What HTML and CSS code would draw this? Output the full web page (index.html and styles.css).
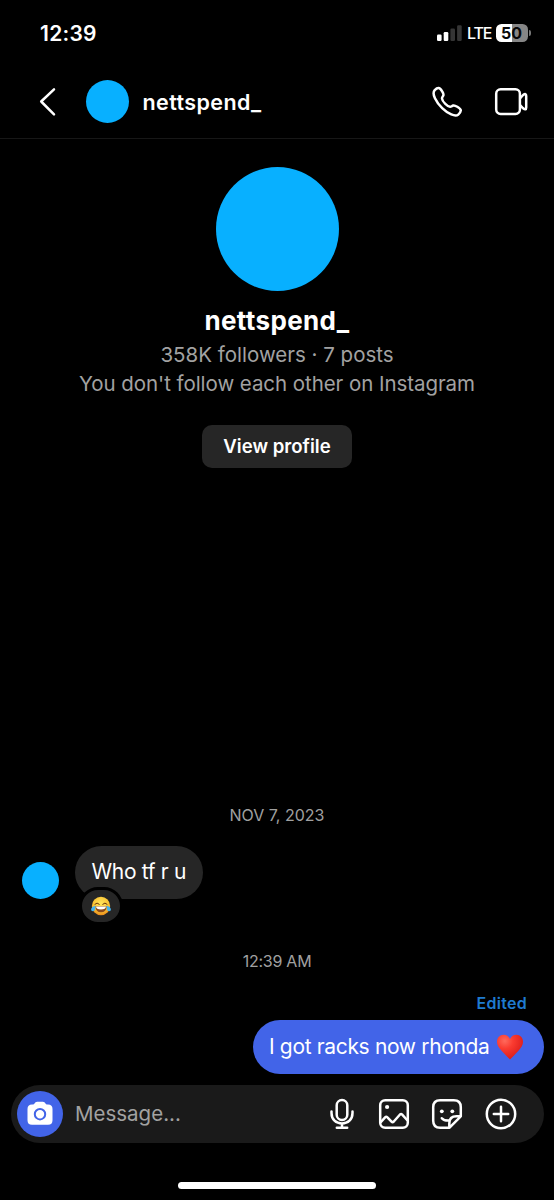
FILE: index.html
```
<!DOCTYPE html>
<html lang="en">
<head>
<meta charset="utf-8">
<title>nettspend_</title>
<link rel="stylesheet" href="styles.css">
</head>
<body>
<main class="screen">
  <div class="status">
    <span class="clock">12:39</span>
    <div class="indicators">
      <svg class="signal" width="25" height="16" viewBox="0 0 25 16">
        <rect x="0" y="9.5" width="4.6" height="6.5" rx="1.2" fill="#fff"/>
        <rect x="6.7" y="7" width="4.6" height="9" rx="1.2" fill="#fff"/>
        <rect x="13.4" y="3.6" width="4.6" height="12.4" rx="1.2" fill="#353535"/>
        <rect x="20.1" y="0.3" width="4.6" height="15.7" rx="1.2" fill="#353535"/>
      </svg>
      <span class="network">LTE</span>
      <div class="battery"><span class="level">50</span></div>
      <span class="nub"></span>
    </div>
  </div>

  <header class="topbar">
    <svg class="back" width="18" height="30" viewBox="0 0 18 30" fill="none" stroke="#fff" stroke-width="2.5" stroke-linecap="round" stroke-linejoin="round"><path d="M15 2.3 2.2 14.5 15 27.3"/></svg>
    <span class="avatar avatar-top"></span>
    <h1 class="name">nettspend_</h1>
    <svg class="phone" width="32" height="32" viewBox="0 0 32 32" fill="none" stroke="#fff" stroke-width="2.5" stroke-linejoin="round"><path d="M3.7 4.1C5 2.8 6.3 2 7.6 2.1C9 2.2 10.1 3.7 11.3 5.6C12.3 7.2 12.9 8.1 12.3 9.5C11.8 10.7 10.9 11.3 11 12.5C11.1 14.2 12.7 16.3 14.3 17.8C16 19.4 17.4 20.7 19 20.8C20.3 20.9 20.8 19.9 22.2 19.5C23.6 19.1 24.7 19.8 26.3 20.8C28.3 22 29.9 23 29.8 24.5C29.7 26.1 28.7 27.4 27.3 28.6C24.2 31.2 17.1 27.8 11.2 22.1C5.2 16.3 .4 7.7 3.7 4.1Z"/></svg>
    <svg class="video" width="34" height="30" viewBox="0 0 34 30" fill="none" stroke="#fff" stroke-width="2.5" stroke-linejoin="round"><rect x="2.2" y="2.3" width="23.7" height="24.6" rx="4.4"/><path d="M26 11.3 29.1 8Q32.2 5.8 32.2 8.9V20.4Q32.2 23.6 29.1 21.3L26 18"/></svg>
  </header>

  <section class="profile">
    <span class="avatar avatar-large"></span>
    <h2 class="title">nettspend_</h2>
    <p class="stats">358K followers · 7 posts</p>
    <p class="relation">You don't follow each other on Instagram</p>
    <button class="view">View profile</button>
  </section>

  <section class="thread">
    <p class="stamp date">NOV 7, 2023</p>
    <div class="incoming">
      <span class="avatar avatar-small"></span>
      <div class="bubble bubble-in">Who tf r u
        <span class="reaction">
          <svg width="20" height="20" viewBox="0 0 20 20">
            <defs><radialGradient id="face" cx=".5" cy=".35" r=".65"><stop offset="0" stop-color="#ffe65c"/><stop offset=".65" stop-color="#fcc433"/><stop offset="1" stop-color="#e98b1c"/></radialGradient></defs>
            <circle cx="10" cy="10" r="9.2" fill="url(#face)"/>
            <path d="M3.9 8.2Q6 5.7 8.3 8.2M11.7 8.2Q14 5.7 16.1 8.2" fill="none" stroke="#653410" stroke-width="1" stroke-linecap="round"/>
            <path d="M4.3 10.2H15.7Q15.3 16.2 10 16.2T4.3 10.2Z" fill="#8a4a1c"/>
            <path d="M5 10.5H15Q14.9 13.4 10 13.4T5 10.5Z" fill="#fff"/>
            <path d="M4.5 9.7C2 10 .1 11.6.1 13.5C.1 15.8 3.5 15.8 4.1 13.2ZM15.5 9.7C18 10 19.9 11.6 19.9 13.5C19.9 15.8 16.5 15.8 15.9 13.2Z" fill="#45b4ef"/>
          </svg>
        </span>
      </div>
    </div>
    <p class="stamp time">12:39 AM</p>
    <p class="edited">Edited</p>
    <div class="bubble bubble-out">
      <span>I got racks now rhonda</span>
      <svg class="heart" width="28" height="28" viewBox="0 0 28 28">
        <defs><radialGradient id="heart" cx=".3" cy=".25" r=".8"><stop offset="0" stop-color="#ff6a5c"/><stop offset=".4" stop-color="#fa3b30"/><stop offset="1" stop-color="#d91b1a"/></radialGradient></defs>
        <path d="M14 26.5C11.8 24.2 8.9 21.5 6 18.3C2.8 14.8 1 12.2 1 8.7C1 4.7 3.8 1.7 7.5 1.7C10.5 1.7 12.8 3.2 14 6C15.2 3.2 17.5 1.7 20.5 1.7C24.2 1.7 27 4.7 27 8.7C27 12.2 25.2 14.8 22 18.3C19.1 21.5 16.2 24.2 14 26.5Z" fill="url(#heart)"/>
      </svg>
    </div>
  </section>

  <footer class="composer">
    <span class="camera">
      <svg width="28" height="28" viewBox="0 0 28 28"><path d="M6 4.5H7Q8 4.5 8.5 3.4Q9.3 1.8 11.1 1.8H16.9Q18.7 1.8 19.5 3.4Q20 4.5 21 4.5H22Q26.5 4.5 26.5 9V20.2Q26.5 24.7 22 24.7H6Q1.5 24.7 1.5 20.2V9Q1.5 4.5 6 4.5Z" fill="#fff"/><circle cx="14" cy="14.2" r="5.2" fill="#fff" stroke="#4264e8" stroke-width="2"/></svg>
    </span>
    <span class="placeholder">Message...</span>
    <div class="tools">
      <svg width="24" height="32" viewBox="0 0 24 32" fill="none" stroke="#fff" stroke-width="2.5" stroke-linecap="round"><rect x="6.7" y="2" width="10.6" height="20" rx="5.3"/><path d="M1.5 13.5V15C1.5 21.5 6 25.5 12 25.5S22.5 21.5 22.5 15V13.5M12 25.5V29.7M6.8 29.7H17.2"/></svg>
      <svg width="32" height="32" viewBox="0 0 32 32" fill="none" stroke="#fff" stroke-width="2.5" stroke-linejoin="round"><rect x="2.2" y="2.2" width="27.6" height="27.6" rx="5"/><path d="M2.5 24.5 7.1 19.3Q8.2 18.2 9.4 19.3L13.5 23.7Q14.6 24.7 15.8 23.5L22 16.5Q23.1 15.5 24.2 16.6L29.5 22.5"/><circle cx="9.1" cy="9" r="2.1" fill="#fff" stroke="none"/></svg>
      <svg width="32" height="32" viewBox="0 0 32 32" fill="none" stroke="#fff" stroke-width="2.5" stroke-linejoin="round" stroke-linecap="round"><path d="M18.3 29.8H9.2Q2.2 29.8 2.2 22.8V9.2Q2.2 2.2 9.2 2.2H22.8Q29.8 2.2 29.8 9.2V18.3ZM18.3 29.8V25.5Q18.3 18.3 25.5 18.3H29.8"/><path d="M10.8 20.2Q13 22.8 17.8 22.6"/><circle cx="10.8" cy="13.3" r="1.9" fill="#fff" stroke="none"/><circle cx="21.3" cy="13.3" r="1.9" fill="#fff" stroke="none"/></svg>
      <svg width="32" height="32" viewBox="0 0 32 32" fill="none" stroke="#fff" stroke-width="2.5" stroke-linecap="round"><circle cx="16" cy="16" r="14.2"/><path d="M16 8.8V23.2M8.8 16H23.2"/></svg>
    </div>
  </footer>
  <span class="home"></span>
</main>
</body>
</html>
```
FILE: styles.css
```
* { box-sizing: border-box; }
body { margin: 0; background: #000; }
h1, h2, p { margin: 0; }
svg { display: block; flex: none; }
.screen {
  width: 554px; height: 1200px; overflow: hidden;
  display: flex; flex-direction: column;
  background: #000; color: #fff;
  font-family: Inter, "Liberation Sans", sans-serif;
  white-space: nowrap;
}
.status { height: 66px; flex: none; display: flex; justify-content: space-between; padding: 0 23px 0 40px; }
.clock { font-size: 21px; font-weight: 600; line-height: 26px; letter-spacing: 0.25px; margin-top: 21px; }
.indicators { display: flex; align-items: center; height: 18px; margin-top: 24px; }
.signal { margin-right: 5px; }
.network { width: 29px; font-size: 16px; font-weight: 500; letter-spacing: -1.1px; line-height: 18px; }
.battery {
  width: 32px; height: 18px; border-radius: 5.5px;
  background: linear-gradient(90deg, #fff 50%, #868686 50%);
  color: #080808; text-align: center;
}
.level { display: block; font-size: 16px; font-weight: 700; line-height: 18px; margin-left: -1px; }
.nub { width: 2px; height: 6px; margin-left: 1px; border-radius: 0 3px 3px 0; background: #777; }
.topbar { height: 73px; flex: none; display: flex; align-items: center; padding: 0 26px 0 39px; border-bottom: 1px solid #171717; }
.avatar { display: block; flex: none; border-radius: 50%; background: #08b0ff; }
.avatar-top { width: 43px; height: 43px; margin: -1px 14px 0 28.5px; }
.name { flex: 1; font-size: 21.5px; font-weight: 600; line-height: 28px; letter-spacing: 0.4px; }
.phone { margin-right: 31px; }
.profile { height: 329px; flex: none; display: flex; flex-direction: column; align-items: center; padding-top: 28px; }
.avatar-large { width: 123px; height: 124px; }
.title { margin-top: 12px; font-size: 26px; font-weight: 700; line-height: 36px; letter-spacing: 0.35px; }
.stats, .relation { color: #a2a2a2; font-size: 20.5px; line-height: 29px; }
.stats { margin-top: 1px; }
.relation { letter-spacing: -0.06px; }
.view {
  width: 150px; height: 43px; margin-top: 27px; padding: 0; border: 0; border-radius: 10px;
  background: #262626; color: #fff; font: 600 18.6px/43px Inter, "Liberation Sans", sans-serif;
}
.thread { flex: 1; display: flex; flex-direction: column; justify-content: flex-end; padding: 0 10.5px 11px; }
.stamp { text-align: center; color: #a0a0a0; font-size: 16px; line-height: 20px; }
.date { margin-bottom: 21px; }
.incoming { display: flex; align-items: flex-end; padding-left: 11px; }
.avatar-small { width: 37px; height: 37px; margin-right: 16.5px; }
.bubble { height: 53px; border-radius: 27px; font-size: 21px; line-height: 52px; letter-spacing: -0.34px; }
.bubble-in { position: relative; width: 128px; padding-left: 16.5px; background: #262626; }
.reaction {
  position: absolute; left: 4px; top: 41px; width: 44px; height: 38px;
  display: grid; place-items: center;
  border: 3px solid #000; border-radius: 19px; background: #262626;
}
.time { margin-top: 52px; letter-spacing: -0.25px; }
.edited { align-self: flex-end; margin: 22px 16.5px 7px 0; color: #1f7bd0; font-size: 16px; font-weight: 600; line-height: 20px; letter-spacing: 0.3px; }
.bubble-out { width: 290.5px; height: 54px; align-self: flex-end; display: flex; align-items: center; padding: 0 20px 0 16px; justify-content: space-between; background: #4264e8; }
.composer { width: 532.5px; height: 58px; flex: none; display: flex; align-items: center; margin-left: 11px; padding: 0 27px 0 6px; border-radius: 29px; background: #1a1a1a; }
.camera { width: 46px; height: 46px; flex: none; display: grid; place-items: center; border-radius: 50%; background: #4264e8; }
.placeholder { margin-left: 12px; color: #a2a2a2; font-size: 20.5px; line-height: 28px; }
.tools { flex: 1; display: flex; justify-content: flex-end; gap: 21.5px; }
.tools svg:first-child { margin-right: 2px; }
.home { width: 198px; height: 7px; flex: none; margin: 39px 0 11px 178px; border-radius: 4px; background: #fff; }
```
